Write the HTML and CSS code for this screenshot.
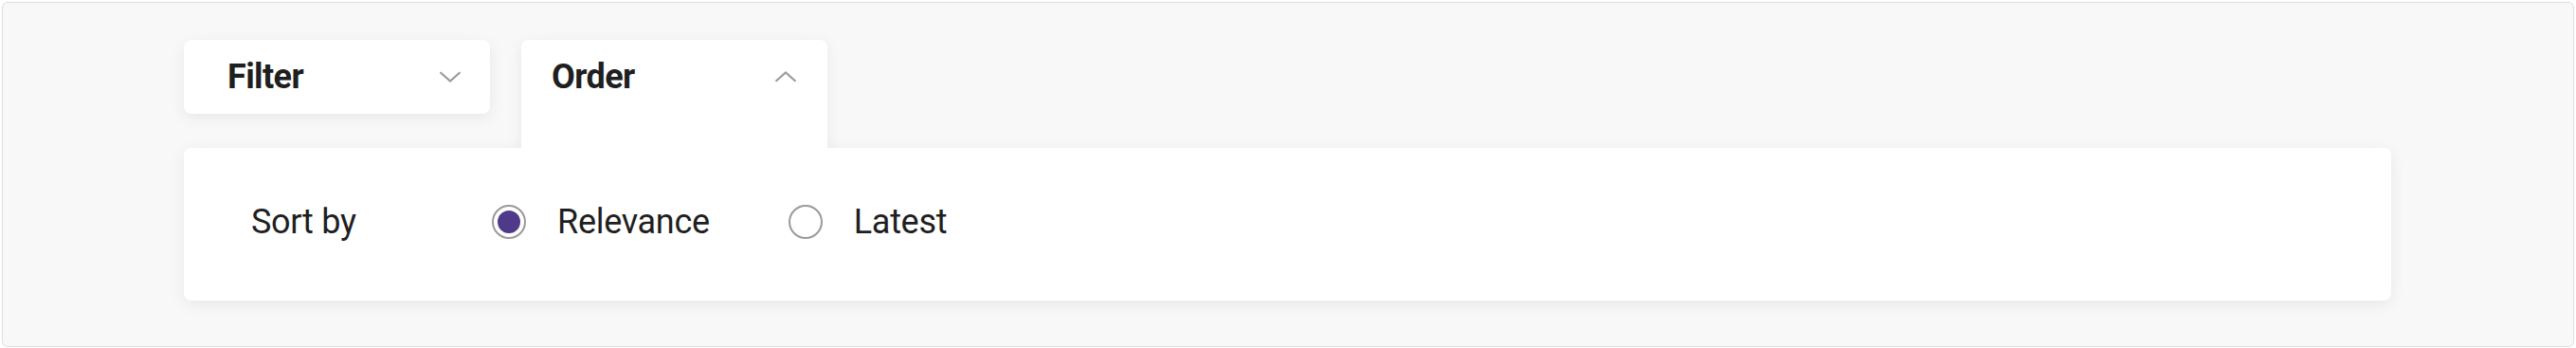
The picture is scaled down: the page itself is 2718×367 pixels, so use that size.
FILE: index.html
```html
<!DOCTYPE html>
<html lang="en">
<head>
<meta charset="utf-8">
<title>Filter and order</title>
<link rel="stylesheet" href="styles.css">
</head>
<body>
<div class="frame">
  <div class="tabs">
    <div class="tab tab-filter">
      <span class="tab-label">Filter</span>
      <svg class="chev" width="24" height="12" viewBox="0 0 24 12"><polyline points="1.5,1.2 12,10.5 22.5,1.2" fill="none" stroke="#9b9b9b" stroke-width="2.2"/></svg>
    </div>
    <div class="tab tab-order">
      <div class="tab-head">
        <span class="tab-label">Order</span>
        <svg class="chev" width="24" height="12" viewBox="0 0 24 12"><polyline points="1.5,10.8 12,1.5 22.5,10.8" fill="none" stroke="#9b9b9b" stroke-width="2.2"/></svg>
      </div>
    </div>
  </div>
  <div class="panel">
    <span class="sort-label">Sort by</span>
    <label class="option">
      <span class="radio checked"></span>
      <span class="option-text">Relevance</span>
    </label>
    <label class="option">
      <span class="radio"></span>
      <span class="option-text">Latest</span>
    </label>
  </div>
</div>
</body>
</html>
```

FILE: styles.css
```css
* { box-sizing: border-box; }
html, body { margin: 0; padding: 0; background: #ffffff; }
body {
  font-family: Roboto, "Liberation Sans", Arial, sans-serif;
  color: #1f1f1f;
}
.frame {
  margin: 2px;
  width: 2714px;
  height: 364px;
  background: #f8f8f8;
  border: 1px solid #dedede;
  border-radius: 6px;
  padding: 39px 0 0 191px;
}
.tabs {
  display: flex;
  gap: 33px;
  align-items: flex-start;
  position: relative;
  z-index: 2;
}
.tab {
  width: 323px;
  background: #ffffff;
  border-radius: 8px;
  box-shadow: 0 4px 16px rgba(0, 0, 0, 0.07);
}
.tab-filter {
  height: 78px;
  display: flex;
  align-items: center;
  justify-content: space-between;
  padding: 0 30px 0 46px;
}
.tab-order {
  height: 114px;
  border-radius: 8px 8px 0 0;
  clip-path: inset(-30px -30px 0 -30px);
}
.tab-head {
  height: 78px;
  display: flex;
  align-items: center;
  justify-content: space-between;
  padding: 0 32px 0 32px;
}
.tab-label {
  font-size: 36px;
  font-weight: 700;
  line-height: 78px;
  letter-spacing: -0.6px;
}
.chev { display: block; }
.panel {
  position: relative;
  z-index: 1;
  width: 2329px;
  height: 161px;
  background: #ffffff;
  border-radius: 8px;
  box-shadow: 0 4px 16px rgba(0, 0, 0, 0.07);
  display: flex;
  align-items: center;
  padding: 60px 0 65px 71px;
}
.sort-label {
  width: 254px;
  font-size: 36px;
  font-weight: 400;
  line-height: 36px;
  letter-spacing: -0.3px;
}
.option {
  display: flex;
  align-items: center;
  gap: 33px;
  margin-right: 83px;
}
.option-text {
  font-size: 36px;
  font-weight: 400;
  line-height: 36px;
  letter-spacing: -0.3px;
}
.radio {
  width: 36px;
  height: 36px;
  border-radius: 50%;
  border: 2px solid #9a9a9a;
  background: #ffffff;
  display: flex;
  align-items: center;
  justify-content: center;
}
.radio.checked::after {
  content: "";
  width: 24px;
  height: 24px;
  border-radius: 50%;
  background: #4f3a89;
}
```
